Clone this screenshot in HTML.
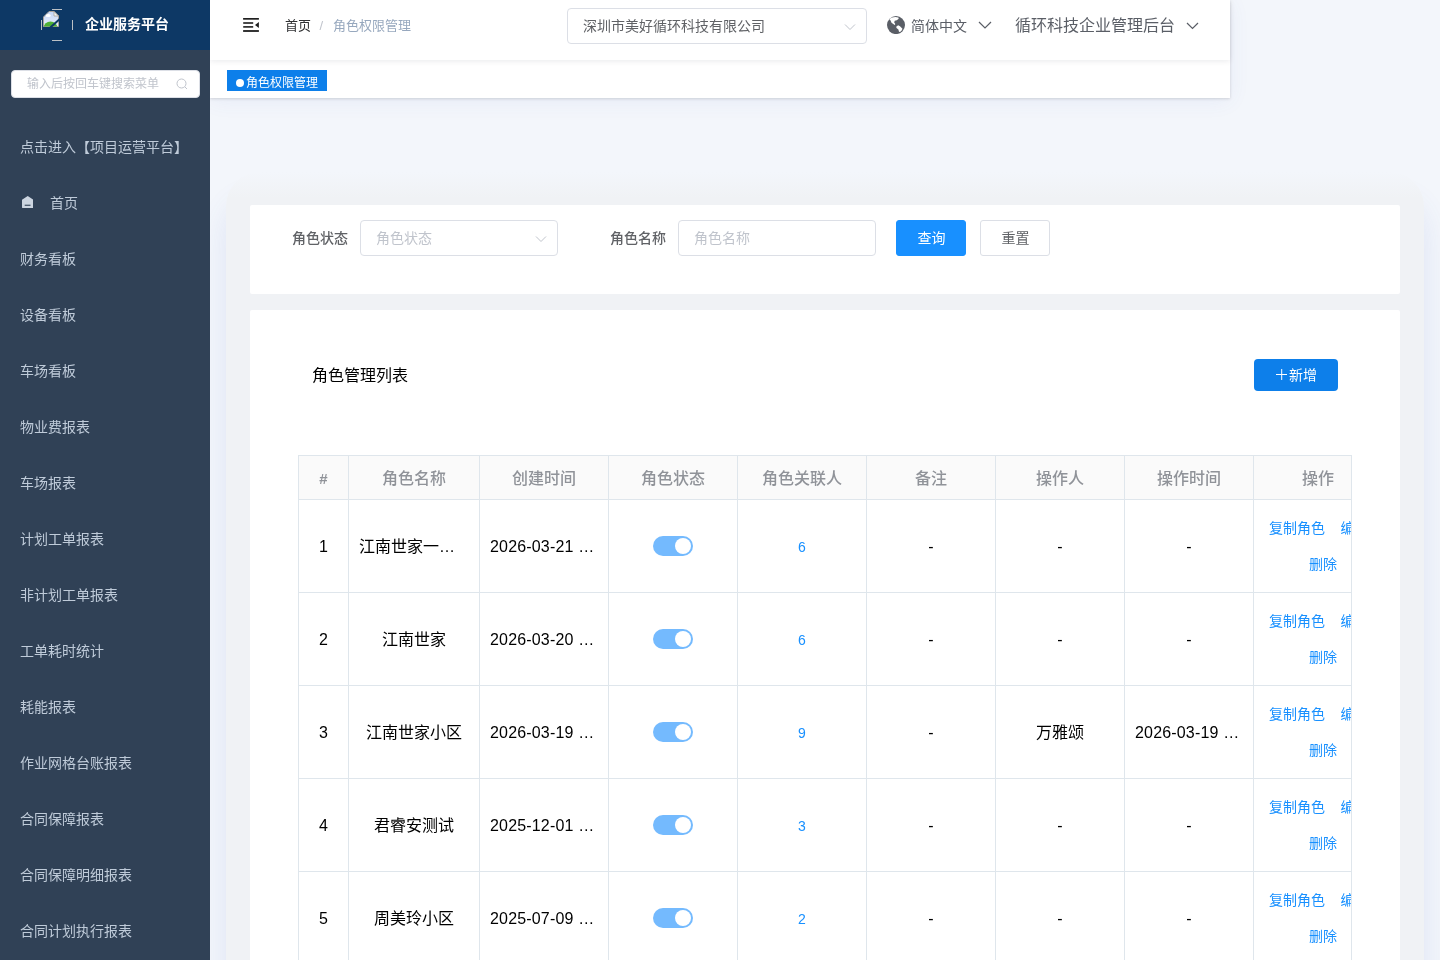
<!DOCTYPE html>
<html lang="zh-CN">
<head>
<meta charset="utf-8">
<title>角色权限管理</title>
<style>
*{box-sizing:border-box;margin:0;padding:0}
html,body{width:1440px;height:960px;overflow:hidden}
body{font-family:"Liberation Sans","Noto Sans CJK SC",sans-serif;background:#f3f6fb;color:#303133;position:relative;font-size:14px}
.abs{position:absolute}
#side,#hdr,.card,#tblwrap{will-change:transform}
/* sidebar */
#side{position:absolute;left:0;top:0;width:210px;height:960px;background:#304156;z-index:10}
#logo{position:absolute;left:0;top:0;width:210px;height:50px;background:#0d3865}
#logo .t{position:absolute;left:85px;top:0;line-height:48px;font-size:14px;font-weight:bold;color:#fff;white-space:nowrap}
#search{position:absolute;left:11px;top:70px;width:189px;height:28px;background:#fff;border-radius:4px;border:1px solid #dcdfe6}
#search span{position:absolute;left:15px;top:0;line-height:26px;font-size:12px;color:#c0c4cc;white-space:nowrap}
.mi{position:absolute;left:20px;height:56px;line-height:56px;font-size:14px;color:#bfcbd9;white-space:nowrap}
/* header */
#hdr{position:absolute;left:210px;top:0;width:1020px;height:97.500px;background:#fff;box-shadow:0 1px 3px 0 rgba(0,0,0,.12),0 0 3px 0 rgba(0,0,0,.04),0 3px 20px rgba(70,100,200,.07);z-index:5}
#nav{position:absolute;left:0;top:0;width:1020px;height:60px;background:#fff;box-shadow:0 1px 6px rgba(0,21,41,.09)}
.bc{position:absolute;top:0;line-height:50px;font-size:14px;white-space:nowrap}
.b13{font-size:13px;line-height:51px}
#tag{position:absolute;left:17px;top:70px;width:100px;height:21px;background:#0d7fea;color:#fff;font-size:12px;line-height:21px;white-space:nowrap}
#tag i{position:absolute;left:9px;top:9px;width:8px;height:8px;border-radius:50%;background:#fff}
#tag span{position:absolute;left:19px;top:3px}
#company{position:absolute;left:357px;top:8px;width:300px;height:36px;border:1px solid #dcdfe6;border-radius:4px;background:#fff}
#company span{position:absolute;left:15px;top:0;line-height:34px;font-size:14px;color:#606266;white-space:nowrap}
/* main */
#wrap{position:absolute;left:226px;top:172px;width:1198px;height:900px;background:linear-gradient(to bottom,#f3f6fb 0,#f0f2f5 26px);box-shadow:0 28px 30px rgba(70,100,200,.12);border-radius:34px 34px 0 0}
.card{position:absolute;background:#fff;border-radius:2px}
.lbl{position:absolute;font-size:14px;font-weight:500;color:#606266;line-height:36px;white-space:nowrap}
.inp{position:absolute;height:36px;border:1px solid #dcdfe6;border-radius:4px;background:#fff}
.inp span{position:absolute;left:15px;top:0;line-height:34px;font-size:14px;color:#c0c4cc;white-space:nowrap}
.btn{position:absolute;height:36px;border-radius:3px;font-size:14px;font-weight:normal;text-indent:1px;line-height:34px;text-align:center;white-space:nowrap}
/* table */
#tblwrap{position:absolute;left:298px;top:455px;width:1054px;height:520px;overflow:hidden;border-right:1px solid #dfe6ec}
table{border-collapse:separate;border-spacing:0;table-layout:fixed;width:1154px;border-top:1px solid #dfe6ec;border-left:1px solid #dfe6ec}
th,td{border-right:1px solid #dfe6ec;border-bottom:1px solid #dfe6ec;text-align:center;padding:0 10px;white-space:nowrap;overflow:hidden;text-overflow:ellipsis}
th{padding-bottom:2px;height:44px;background:#fafafa;color:#909399;font-weight:500;font-size:16px}
td{height:93px;color:#000;font-size:16px;background:#fff}
td.n{color:#1890ff;font-size:14px}
td.e{text-align:left;text-overflow:clip}
td.l.e{letter-spacing:.17px}
td.l{padding-top:2px}
td.c{padding-bottom:2px}
td.op{color:#1890ff;font-size:14px;padding:0;line-height:36px;text-overflow:clip}
.sw{display:inline-block;width:40px;height:20px;border-radius:10px;background:#74bafe;position:relative;vertical-align:middle}
.sw:after{content:"";position:absolute;right:2px;top:2px;width:16px;height:16px;border-radius:50%;background:#fff}
</style>
</head>
<body>
<div id="side">
  <div id="logo">
    <svg class="abs" style="left:40px;top:8px" width="36" height="34" viewBox="0 0 36 34">
      <defs><linearGradient id="sky" x1="0" y1="0" x2="0" y2="1"><stop offset="0" stop-color="#c4d6f6"/><stop offset="1" stop-color="#e9eefb"/></linearGradient>
      <clipPath id="pg"><path d="M3.500 9 L9 3.500 H14 L18.500 8 V18.500 H3.500 Z"/></clipPath></defs>
      <g>
        <path d="M3.500 9 L9 3.500 H14 L18.500 8 V18.500 H3.500 Z" fill="url(#sky)" stroke="#aaa39b" stroke-width="1"/>
        <g clip-path="url(#pg)">
          <ellipse cx="8.200" cy="7.600" rx="2.600" ry="1.500" fill="#fff"/>
          <ellipse cx="10.500" cy="19.500" rx="6.800" ry="6" fill="#4eb135"/>
        </g>
        <path d="M14 3.500 V8 H18.500 Z" fill="#f3f3f1" stroke="#aaa39b" stroke-width=".8" stroke-linejoin="round"/>
        <path d="M19.500 11.300 L10.300 19.500" stroke="#0d3865" stroke-width="2"/>
      </g>
      <g stroke="#cfd0d0" stroke-width="1" opacity=".9">
        <path d="M12 1.500h10"/><path d="M12 32.500h10"/><path d="M1.500 12v10"/><path d="M32.500 12v10"/>
      </g>
    </svg>
    <div class="t">企业服务平台</div>
  </div>
  <div id="search"><span>输入后按回车键搜索菜单</span>
    <svg class="abs" style="left:163px;top:5.500px" width="14" height="14" viewBox="0 0 14 14" fill="none" stroke="#c0c4cc" stroke-width="1"><circle cx="6.5" cy="6.5" r="4.5"/><path d="M10 10l2 2"/></svg>
  </div>
  <div class="mi" style="top:119px">点击进入【项目运营平台】</div>
  <svg class="abs" style="left:21.500px;top:195.600px" width="11.500" height="12.400" viewBox="0 0 11.500 12.400"><path d="M0 3.800L5.750 0l5.750 3.800V11a1.400 1.400 0 0 1-1.400 1.400H1.400A1.400 1.400 0 0 1 0 11z" fill="#ccd5e0"/><rect x="2.700" y="8.700" width="5.800" height="1.100" fill="#304156"/></svg>
  <div class="mi" style="top:175px;left:50px">首页</div>
  <div class="mi" style="top:231px">财务看板</div>
  <div class="mi" style="top:287px">设备看板</div>
  <div class="mi" style="top:343px">车场看板</div>
  <div class="mi" style="top:399px">物业费报表</div>
  <div class="mi" style="top:455px">车场报表</div>
  <div class="mi" style="top:511px">计划工单报表</div>
  <div class="mi" style="top:567px">非计划工单报表</div>
  <div class="mi" style="top:623px">工单耗时统计</div>
  <div class="mi" style="top:679px">耗能报表</div>
  <div class="mi" style="top:735px">作业网格台账报表</div>
  <div class="mi" style="top:791px">合同保障报表</div>
  <div class="mi" style="top:847px">合同保障明细报表</div>
  <div class="mi" style="top:903px">合同计划执行报表</div>
</div>

<div id="hdr">
  <div id="nav">
    <svg class="abs" style="left:33px;top:17px" width="18" height="16" viewBox="0 0 18 16"><g fill="#1f1f1f"><rect x="0.100" y="1" width="15.800" height="1.700"/><rect x="0.200" y="5.200" width="10" height="1.600"/><rect x="0.200" y="9.100" width="10" height="1.600"/><rect x="0.100" y="13.100" width="15.800" height="1.800"/><path d="M15.900 5.100v5.800L12 8z"/></g></svg>
    <div class="bc b13" style="left:75px;color:#303133">首页</div>
    <div class="bc b13" style="left:109.500px;color:#c0c4cc">/</div>
    <div class="bc b13" style="left:123px;color:#97a8be">角色权限管理</div>
    <div id="company"><span>深圳市美好循环科技有限公司</span>
      <svg class="abs" style="left:276px;top:14px" width="12" height="8" viewBox="0 0 12 8" fill="none" stroke="#c0c4cc" stroke-width="1"><path d="M1 1.500l5 5 5-5"/></svg>
    </div>
    <svg class="abs" style="left:677px;top:15.800px" width="18" height="18.200" viewBox="0 0 18 18.200"><circle cx="9" cy="9.100" r="9" fill="#5a5e66"/><path d="M2.300 3.300C4.500 1 8.500 0.300 11.400 1.400L11.700 2.700L9.800 4.200L7.700 4.800L7.200 6.400L8.300 8L7.700 8.900L4.500 6.700L3.600 4.500Z" fill="#fff"/><path d="M9.200 10.800L11.100 9.200L13 10.200L15.500 12.700L14.500 14.800L13 16.100L12 15.800L11.400 13.600L9.500 12Z" fill="#fff"/></svg>
    <div class="bc" style="left:701px;color:#5a5e66;line-height:52px">简体中文</div>
    <svg class="abs" style="left:768px;top:20.700px" width="14" height="9" viewBox="0 0 14 9" fill="none" stroke="#5a5e66" stroke-width="1.200"><path d="M1 1l6 6 6-6"/></svg>
    <div class="bc" style="left:805px;color:#5a5e66;font-size:16px;line-height:52px">循环科技企业管理后台</div>
    <svg class="abs" style="left:976px;top:21.800px" width="13" height="8" viewBox="0 0 13 8" fill="none" stroke="#5a5e66" stroke-width="1.200"><path d="M1 1l5.500 5.500L12 1"/></svg>
  </div>
  <div id="tag"><i></i><span>角色权限管理</span></div>
</div>

<div id="wrap"></div>
<div class="card" style="left:250px;top:205px;width:1150px;height:89px">
  <div class="lbl" style="left:42px;top:15px">角色状态</div>
  <div class="inp" style="left:110px;top:15px;width:198px"><span>角色状态</span>
    <svg class="abs" style="left:174px;top:14px" width="12" height="8" viewBox="0 0 12 8" fill="none" stroke="#c0c4cc" stroke-width="1"><path d="M1 1.500l5 5 5-5"/></svg>
  </div>
  <div class="lbl" style="left:360px;top:15px">角色名称</div>
  <div class="inp" style="left:428px;top:15px;width:198px"><span>角色名称</span></div>
  <div class="btn" style="left:646px;top:15px;width:70px;background:#1890ff;border:1px solid #1890ff;color:#fff">查询</div>
  <div class="btn" style="left:730px;top:15px;width:70px;background:#fff;border:1px solid #dcdfe6;color:#606266">重置</div>
</div>
<div class="card" style="left:250px;top:310px;width:1150px;height:700px">
  <div class="abs" style="left:62px;top:53px;font-size:16px;line-height:26px;color:#000;white-space:nowrap">角色管理列表</div>
  <div class="btn" style="left:1004px;top:49px;width:84px;height:32px;line-height:32px;background:#0d7fea;color:#fff;border-radius:4px;font-weight:normal;text-align:left;text-indent:0"><svg class="abs" style="left:22px;top:10.300px" width="11.400" height="11" viewBox="0 0 11.400 11" stroke="#fff" stroke-width="1" fill="none"><path d="M0 5.500h11.400M5.700 0v11"/></svg><span class="abs" style="left:35px;top:0">新增</span></div>
</div>
<div id="tblwrap">
<table>
<colgroup><col style="width:50px"><col style="width:131px"><col style="width:129px"><col style="width:129px"><col style="width:129px"><col style="width:129px"><col style="width:129px"><col style="width:129px"><col style="width:198px"></colgroup>
<tr><th style="font-weight:bold;padding:2px 0 0 0;font-size:15px">#</th><th>角色名称</th><th>创建时间</th><th>角色状态</th><th>角色关联人</th><th>备注</th><th>操作人</th><th>操作时间</th><th style="text-align:left;padding-left:48px">操作</th></tr>
<tr><td class="l">1</td><td class="c e">江南世家一…</td><td class="l e">2026-03-21 …</td><td><span class="sw"></span></td><td class="n l">6</td><td class="l">-</td><td class="l">-</td><td class="l">-</td><td class="op"><div style="text-align:left;padding-left:15px">复制角色&nbsp;&nbsp;&nbsp;&nbsp;编辑</div><div style="text-align:left;padding-left:55px">删除</div></td></tr>
<tr><td class="l">2</td><td class="c">江南世家</td><td class="l e">2026-03-20 …</td><td><span class="sw"></span></td><td class="n l">6</td><td class="l">-</td><td class="l">-</td><td class="l">-</td><td class="op"><div style="text-align:left;padding-left:15px">复制角色&nbsp;&nbsp;&nbsp;&nbsp;编辑</div><div style="text-align:left;padding-left:55px">删除</div></td></tr>
<tr><td class="l">3</td><td class="c">江南世家小区</td><td class="l e">2026-03-19 …</td><td><span class="sw"></span></td><td class="n l">9</td><td class="l">-</td><td class="c">万雅颂</td><td class="l e">2026-03-19 …</td><td class="op"><div style="text-align:left;padding-left:15px">复制角色&nbsp;&nbsp;&nbsp;&nbsp;编辑</div><div style="text-align:left;padding-left:55px">删除</div></td></tr>
<tr><td class="l">4</td><td class="c">君睿安测试</td><td class="l e">2025-12-01 …</td><td><span class="sw"></span></td><td class="n l">3</td><td class="l">-</td><td class="l">-</td><td class="l">-</td><td class="op"><div style="text-align:left;padding-left:15px">复制角色&nbsp;&nbsp;&nbsp;&nbsp;编辑</div><div style="text-align:left;padding-left:55px">删除</div></td></tr>
<tr><td class="l">5</td><td class="c">周美玲小区</td><td class="l e">2025-07-09 …</td><td><span class="sw"></span></td><td class="n l">2</td><td class="l">-</td><td class="l">-</td><td class="l">-</td><td class="op"><div style="text-align:left;padding-left:15px">复制角色&nbsp;&nbsp;&nbsp;&nbsp;编辑</div><div style="text-align:left;padding-left:55px">删除</div></td></tr>
</table>
</div>
</body>
</html>
